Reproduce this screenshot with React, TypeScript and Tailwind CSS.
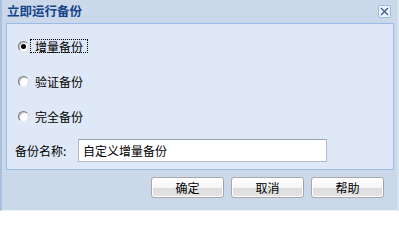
import React from "react";

const font = { fontFamily: '"Noto Sans CJK SC", "Liberation Sans", sans-serif' };

function Radio({ label, checked, focused }: { label: string; checked?: boolean; focused?: boolean }) {
  return (
    <div className="flex items-center h-[16px]">
      <span className="ml-[11px] w-[11px] h-[11px] rounded-full border border-[#7a7a7a] border-r-[#d8d8d8] border-b-[#e8e8e8] bg-white flex items-center justify-center shadow-[inset_1px_1px_0_#c0c0c0]">
        {checked && <span className="w-[5px] h-[5px] rounded-full bg-black" />}
      </span>
      <span
        className={`ml-[1px] px-[4px] h-[14px] leading-[13px] text-[12px] text-black border border-dotted ${
          focused ? "border-black" : "border-transparent"
        }`}
      >
        {label}
      </span>
    </div>
  );
}

function Btn({ children }: { children: React.ReactNode }) {
  return (
    <button className="w-[73px] h-[21px] rounded-[3px] border border-[#a8a8a8] bg-[linear-gradient(#ffffff_0%,#f6f6f6_52%,#dddddd_53%,#e4e4e4_100%)] text-[12px] text-black leading-[19px] shadow-[inset_0_0_0_1px_#ffffff]">
      {children}
    </button>
  );
}

export default function App() {
  return (
    <div
      style={font}
      className="w-[399px] h-[211px] bg-[#cad8e9] border-l-2 border-l-[#a9c0de] border-r-2 border-r-[#d7e2ef] border-b border-b-[#eef3f9] flex flex-col"
    >
      {/* title bar */}
      <div className="h-[23px] shrink-0 flex items-center justify-between pl-[5px] pr-[6px]">
        <span className="text-[12.5px] font-bold text-[#15428b] leading-none">立即运行备份</span>
        <span className="w-[13px] h-[13px] mt-[-1px] border border-[#99bbe8] bg-[#eef3fb] rounded-[2px] flex items-center justify-center">
          <svg width="9" height="9" viewBox="0 0 9 9">
            <path d="M1 1 L8 8 M8 1 L1 8" stroke="#3d5b9c" strokeWidth="1.3" />
          </svg>
        </span>
      </div>

      {/* body */}
      <div className="ml-[4px] mr-[3px] h-[147px] shrink-0 border border-[#99bbe8] bg-[#dfe8f6] flex flex-col">
        <div className="mt-[14px] flex flex-col gap-[19px]">
          <Radio label="增量备份" checked focused />
          <Radio label="验证备份" />
          <Radio label="完全备份" />
        </div>
        <div className="mt-[15px] flex items-center">
          <span className="ml-[8px] text-[12px] text-black w-[63px]">备份名称:</span>
          <div className="w-[249px] h-[23px] border border-[#b5b8c8] border-t-[#9da0b0] bg-white flex items-center pl-[4px] text-[12px] text-black">
            自定义增量备份
          </div>
        </div>
      </div>

      {/* footer */}
      <div className="flex-1 pt-[7px] flex justify-end gap-[7px] pr-[13px]">
        <Btn>确定</Btn>
        <Btn>取消</Btn>
        <Btn>帮助</Btn>
      </div>
    </div>
  );
}
